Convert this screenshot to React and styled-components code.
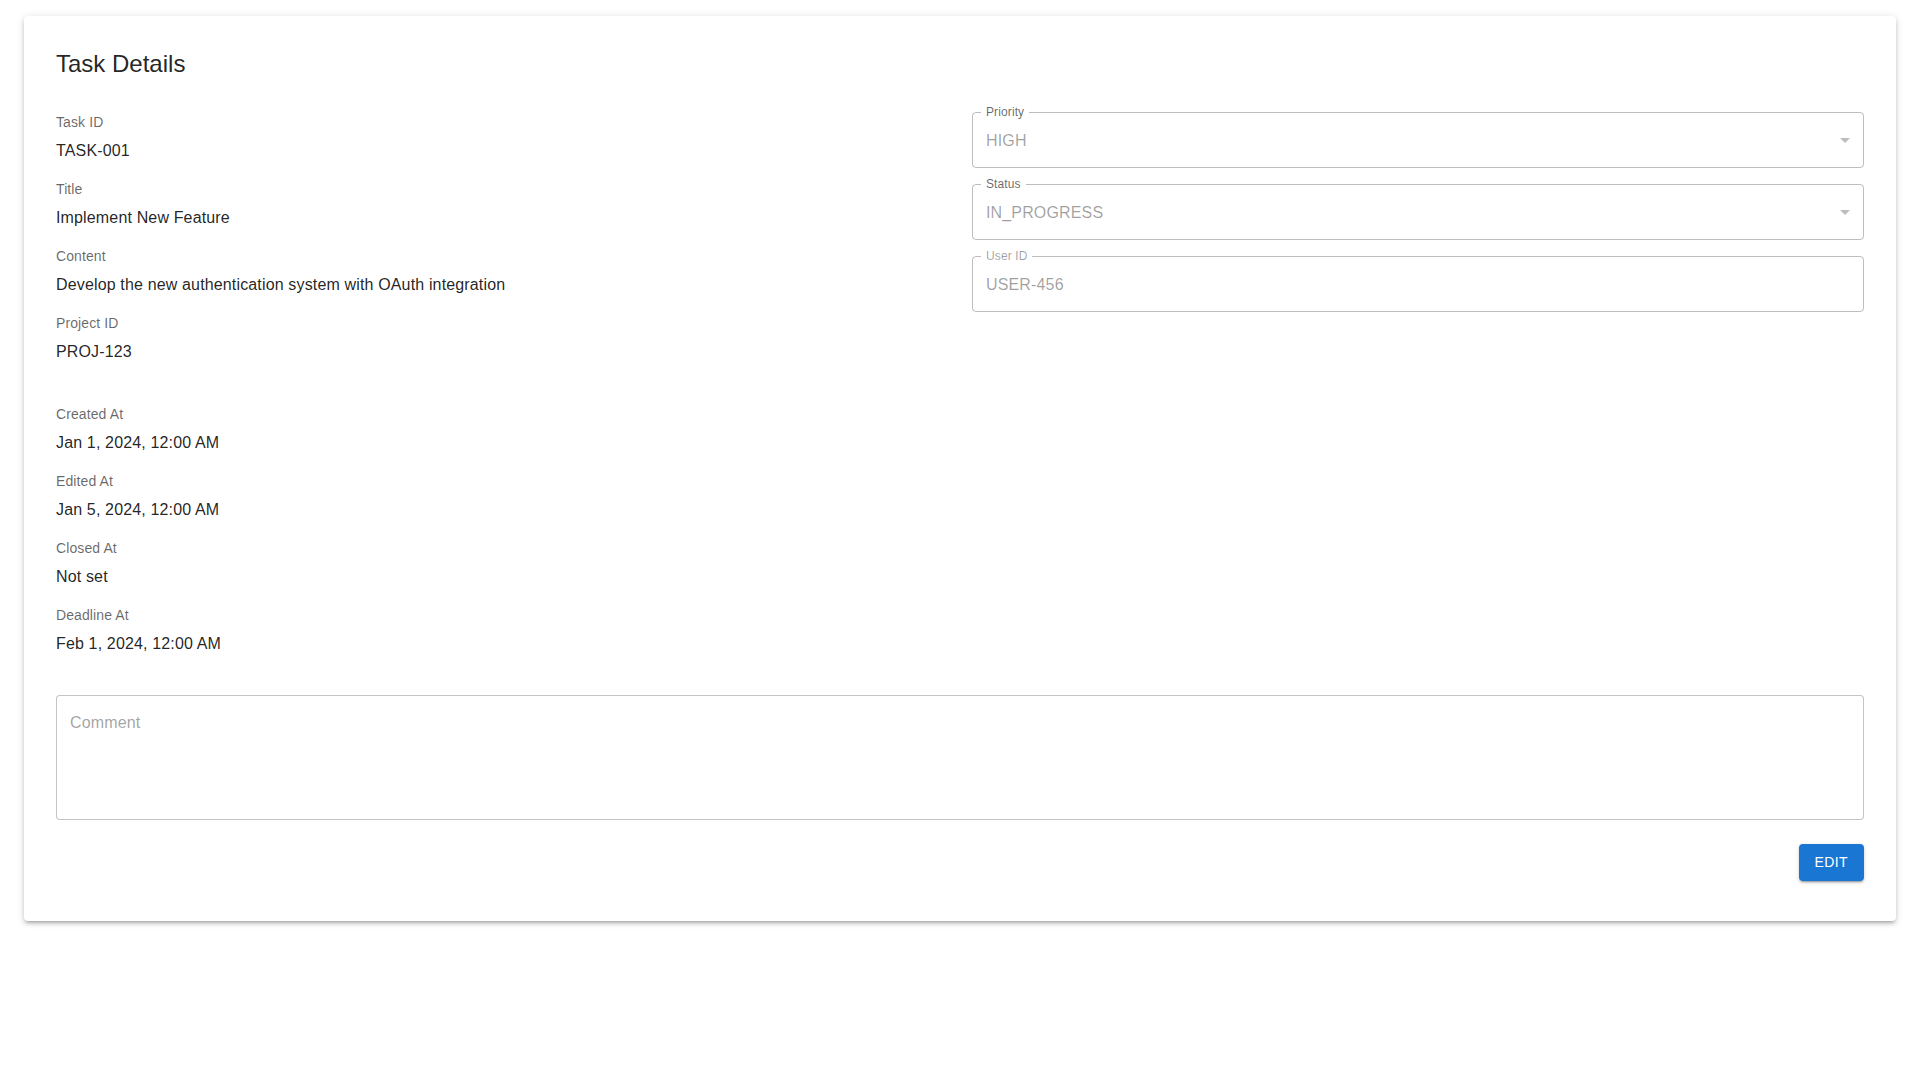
import React from "react";
import styled, { createGlobalStyle } from "styled-components";

const GlobalStyle = createGlobalStyle`
  html, body {
    margin: 0;
    padding: 0;
    background: #ffffff;
  }
  body {
    font-family: "Liberation Sans", Arial, sans-serif;
    color: rgba(0, 0, 0, 0.87);
  }
  * {
    box-sizing: border-box;
  }
`;

const Page = styled.div`
  padding: 16px 24px;
`;

const Card = styled.section`
  background: #ffffff;
  border-radius: 4px;
  box-shadow: 0px 3px 3px -2px rgba(0, 0, 0, 0.2),
    0px 3px 4px 0px rgba(0, 0, 0, 0.14), 0px 1px 8px 0px rgba(0, 0, 0, 0.12);
  padding: 32px 32px 40px;
`;

const Title = styled.h2`
  margin: 0 0 32px;
  font-size: 24px;
  line-height: 32px;
  font-weight: 400;
  color: rgba(0, 0, 0, 0.87);
`;

const Grid = styled.div`
  display: grid;
  grid-template-columns: 1fr 1fr;
  column-gap: 24px;
  align-items: start;
`;

const Column = styled.div`
  display: flex;
  flex-direction: column;
`;

const Group = styled.div`
  display: flex;
  flex-direction: column;
  margin-top: ${(p) => p.$offset || 0}px;
`;

const Info = styled.div`
  margin-bottom: 16px;
`;

const InfoLabel = styled.div`
  font-size: 14px;
  line-height: 21px;
  letter-spacing: 0.1px;
  color: rgba(0, 0, 0, 0.6);
  margin-bottom: 6px;
`;

const InfoValue = styled.div`
  font-size: 16px;
  line-height: 24px;
  letter-spacing: 0.15px;
  color: rgba(0, 0, 0, 0.87);
`;

const FieldStack = styled.div`
  display: flex;
  flex-direction: column;
  gap: 16px;
`;

const Outlined = styled.div`
  position: relative;
  height: 56px;
  border: 1px solid rgba(0, 0, 0, 0.26);
  border-radius: 4px;
  display: flex;
  align-items: center;
  padding: 0 6px 0 13px;
`;

const FloatLabel = styled.span`
  position: absolute;
  top: -7px;
  left: 8px;
  padding: 0 5px;
  background: #ffffff;
  font-size: 12px;
  line-height: 12px;
  letter-spacing: 0.11px;
  color: ${(p) => (p.$disabled ? "rgba(0, 0, 0, 0.38)" : "rgba(0, 0, 0, 0.6)")};
`;

const FieldValue = styled.span`
  flex: 1;
  font-size: 16px;
  line-height: 23px;
  letter-spacing: 0.15px;
  color: rgba(0, 0, 0, 0.38);
`;

const ArrowIcon = styled.svg`
  width: 24px;
  height: 24px;
  flex-shrink: 0;
  fill: rgba(0, 0, 0, 0.26);
`;

const Comment = styled.textarea`
  display: block;
  width: 100%;
  height: 125px;
  margin: 23.3px 0 0;
  padding: 15px 13px 16px;
  border: 1px solid rgba(0, 0, 0, 0.23);
  border-radius: 4px;
  font-family: "Liberation Sans", Arial, sans-serif;
  font-size: 16px;
  line-height: 23px;
  letter-spacing: 0.15px;
  color: rgba(0, 0, 0, 0.87);
  resize: none;
  outline: none;
  background: #ffffff;
  &::placeholder {
    color: rgba(0, 0, 0, 0.87);
    opacity: 0.42;
  }
`;

const Actions = styled.div`
  display: flex;
  justify-content: flex-end;
  margin-top: 24px;
`;

const Button = styled.button`
  min-width: 64px;
  padding: 6px 16px;
  border: 0;
  border-radius: 4px;
  background: #1976d2;
  color: #ffffff;
  font-family: "Liberation Sans", Arial, sans-serif;
  font-size: 14px;
  font-weight: 500;
  line-height: 24.5px;
  letter-spacing: 0.4px;
  text-transform: uppercase;
  cursor: pointer;
  box-shadow: 0px 3px 1px -2px rgba(0, 0, 0, 0.2),
    0px 2px 2px 0px rgba(0, 0, 0, 0.14), 0px 1px 5px 0px rgba(0, 0, 0, 0.12);
`;

const mainInfo = [
  ["Task ID", "TASK-001"],
  ["Title", "Implement New Feature"],
  ["Content", "Develop the new authentication system with OAuth integration"],
  ["Project ID", "PROJ-123"],
];

const dateInfo = [
  ["Created At", "Jan 1, 2024, 12:00 AM"],
  ["Edited At", "Jan 5, 2024, 12:00 AM"],
  ["Closed At", "Not set"],
  ["Deadline At", "Feb 1, 2024, 12:00 AM"],
];

const fields = [
  { label: "Priority", value: "HIGH", select: true },
  { label: "Status", value: "IN_PROGRESS", select: true },
  { label: "User ID", value: "USER-456", select: false, disabled: true },
];

function InfoGroup({ items, offset }) {
  return (
    <Group $offset={offset}>
      {items.map(([label, value]) => (
        <Info key={label}>
          <InfoLabel>{label}</InfoLabel>
          <InfoValue>{value}</InfoValue>
        </Info>
      ))}
    </Group>
  );
}

export default function App() {
  return (
    <>
      <GlobalStyle />
      <Page>
        <Card>
          <Title>Task Details</Title>
          <Grid>
            <Column>
              <InfoGroup items={mainInfo} />
              <InfoGroup items={dateInfo} offset={24} />
            </Column>
            <FieldStack>
              {fields.map((f) => (
                <Outlined key={f.label}>
                  <FloatLabel $disabled={f.disabled}>{f.label}</FloatLabel>
                  <FieldValue>{f.value}</FieldValue>
                  {f.select && (
                    <ArrowIcon viewBox="0 0 24 24" aria-hidden="true">
                      <path d="M7 10l5 5 5-5z" />
                    </ArrowIcon>
                  )}
                </Outlined>
              ))}
            </FieldStack>
          </Grid>
          <Comment placeholder="Comment" rows={4} />
          <Actions>
            <Button>Edit</Button>
          </Actions>
        </Card>
      </Page>
    </>
  );
}
